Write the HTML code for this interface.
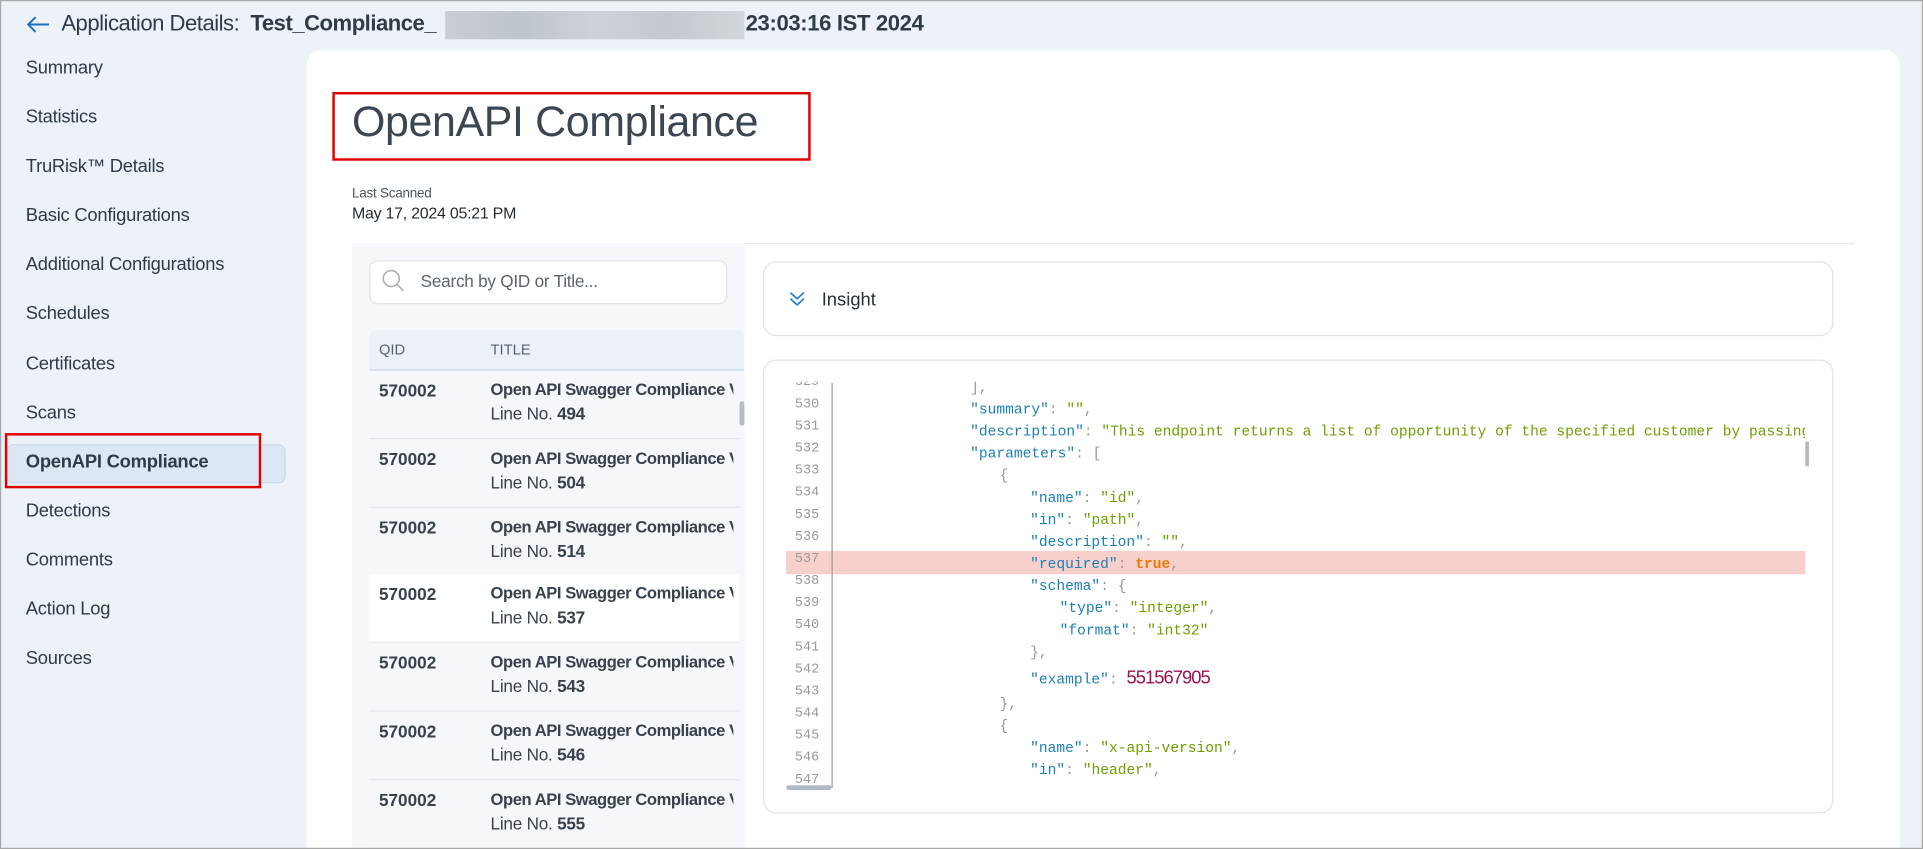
<!DOCTYPE html>
<html><head><meta charset="utf-8">
<style>
html,body{margin:0;padding:0;width:1923px;height:849px;overflow:hidden;background:#edf2f9;}
#s{position:absolute;left:0;top:0;width:1568px;height:692px;overflow:hidden;transform:scale(1.2264,1.2269);transform-origin:0 0;font-family:"Liberation Sans",sans-serif;color:#2d3a45;background:#edf2f9;}
.a{position:absolute;}
.nav{position:absolute;left:21px;font-size:15px;color:#2f3b47;letter-spacing:-0.2px;}
.row{position:absolute;left:301px;width:302px;height:55px;border-bottom:1px solid #e3e7ec;}
.row .q{position:absolute;left:8px;top:8px;font-weight:bold;font-size:14px;color:#37424d;}
.row .t{position:absolute;left:99px;top:8px;font-weight:bold;font-size:13.5px;letter-spacing:-0.35px;color:#37424d;white-space:nowrap;width:198px;overflow:hidden;}
.row .l{position:absolute;left:99px;top:27px;font-size:14px;color:#37424d;letter-spacing:-0.2px;}
.ln{position:absolute;left:640px;width:28px;text-align:right;font-family:"Liberation Mono",monospace;font-size:11px;color:#9a9a9a;}
.cd{position:absolute;font-family:"Liberation Mono",monospace;font-size:11.9px;color:#999;white-space:pre;}
.k{color:#1d7fb7}.s{color:#6e9f00}
</style></head><body><div id="s">
<!-- header -->
<svg class="a" style="left:21px;top:12px" width="20" height="16" viewBox="0 0 20 16"><path d="M19 8H2M8 2L2 8l6 6" fill="none" stroke="#1c6fc4" stroke-width="1.6"/></svg>
<div class="a" style="left:50px;top:9px;font-size:18px;letter-spacing:-0.4px;color:#2f3b47;white-space:nowrap;">Application Details:&nbsp; <b>Test_Compliance_</b></div>
<div class="a" style="left:363px;top:9px;width:244px;height:23px;background:linear-gradient(90deg,#c9ced4,#bfc5cc,#cdd2d8,#c3c9cf,#d2d6db);"></div>
<div class="a" style="left:608px;top:9px;font-size:18px;letter-spacing:-0.3px;font-weight:bold;color:#2f3b47;">23:03:16 IST 2024</div>
<!-- sidebar -->
<div class="a" style="left:5px;top:362px;width:226px;height:30px;background:#dbe7f4;border:1px solid #c9daee;border-radius:6px;"></div>
<div class="a" style="left:4px;top:353px;width:205px;height:41px;border:2px solid #e00000;"></div>
<div class="nav" style="top:47px">Summary</div>
<div class="nav" style="top:87px">Statistics</div>
<div class="nav" style="top:127px">TruRisk™ Details</div>
<div class="nav" style="top:167px">Basic Configurations</div>
<div class="nav" style="top:207px">Additional Configurations</div>
<div class="nav" style="top:247px">Schedules</div>
<div class="nav" style="top:288px">Certificates</div>
<div class="nav" style="top:328px">Scans</div>
<div class="nav" style="top:368px;font-weight:bold">OpenAPI Compliance</div>
<div class="nav" style="top:408px">Detections</div>
<div class="nav" style="top:448px">Comments</div>
<div class="nav" style="top:488px">Action Log</div>
<div class="nav" style="top:528px">Sources</div>
<!-- main card -->
<div class="a" style="left:250px;top:41px;width:1299px;height:680px;background:#fff;border-radius:12px;"></div>
<div class="a" style="left:271px;top:75px;width:386px;height:52px;border:2px solid #e00000;"></div>
<div class="a" style="left:287px;top:80px;font-size:35px;color:#3a4652;letter-spacing:-0.3px;">OpenAPI Compliance</div>
<div class="a" style="left:287px;top:152px;font-size:11px;color:#4a5560;letter-spacing:-0.2px;">Last Scanned</div>
<div class="a" style="left:287px;top:166px;font-size:13px;color:#1f2a33;letter-spacing:-0.2px;">May 17, 2024 05:21 PM</div>
<div class="a" style="left:607px;top:198px;width:905px;height:1px;background:#e6e9ed;"></div>
<!-- left panel -->
<div class="a" style="left:287px;top:198px;width:320px;height:500px;background:#f5f7fa;"></div>
<div class="a" style="left:301px;top:212px;width:290px;height:34px;background:#fff;border:1px solid #dfe3e8;border-radius:7px;"></div>
<svg class="a" style="left:311px;top:219px" width="20" height="20" viewBox="0 0 20 20"><circle cx="8" cy="8" r="6.5" fill="none" stroke="#a8b0b8" stroke-width="1.3"/><path d="M12.8 12.8L18 18" stroke="#a8b0b8" stroke-width="1.3"/></svg>
<div class="a" style="left:343px;top:221px;font-size:14px;color:#5a6570;letter-spacing:-0.2px;">Search by QID or Title...</div>
<div class="a" style="left:301px;top:269px;width:306px;height:32px;background:#ecf1f8;border-bottom:1px solid #b9d0ea;border-radius:6px 6px 0 0;"></div>
<div class="a" style="left:309px;top:278px;font-size:12px;color:#56626d;">QID</div>
<div class="a" style="left:400px;top:278px;font-size:12px;color:#56626d;">TITLE</div>
<div class="row" style="top:302px"><div class="q">570002</div><div class="t">Open API Swagger Compliance V</div><div class="l">Line No. <b>494</b></div></div>
<div class="row" style="top:358px"><div class="q">570002</div><div class="t">Open API Swagger Compliance V</div><div class="l">Line No. <b>504</b></div></div>
<div class="row" style="top:414px"><div class="q">570002</div><div class="t">Open API Swagger Compliance V</div><div class="l">Line No. <b>514</b></div></div>
<div class="row" style="top:468px;background:#fff"><div class="q">570002</div><div class="t">Open API Swagger Compliance V</div><div class="l">Line No. <b>537</b></div></div>
<div class="row" style="top:524px"><div class="q">570002</div><div class="t">Open API Swagger Compliance V</div><div class="l">Line No. <b>543</b></div></div>
<div class="row" style="top:580px"><div class="q">570002</div><div class="t">Open API Swagger Compliance V</div><div class="l">Line No. <b>546</b></div></div>
<div class="row" style="top:636px"><div class="q">570002</div><div class="t">Open API Swagger Compliance V</div><div class="l">Line No. <b>555</b></div></div>
<div class="a" style="left:603px;top:327px;width:4px;height:20px;background:#b4bcc5;border-radius:2px;"></div>
<!-- insight -->
<div class="a" style="left:622px;top:213px;width:871px;height:59px;border:1px solid #dde2e8;border-radius:11px;background:#fff;"></div>
<svg class="a" style="left:643px;top:237px" width="14" height="14" viewBox="0 0 14 14"><path d="M1.5 1.5l5.5 5 5.5-5M1.5 6.5l5.5 5 5.5-5" fill="none" stroke="#1f7fd0" stroke-width="1.3"/></svg>
<div class="a" style="left:670px;top:236px;font-size:15px;color:#24303b;">Insight</div>
<!-- code -->
<div class="a" style="left:622px;top:293px;width:871px;height:368px;border:1px solid #dde2e8;border-radius:11px;background:#fff;"></div>
<div class="a" style="left:641px;top:449px;width:831px;height:19px;background:#f7d0cb;"></div>
<div class="a" style="left:678px;top:312px;width:1px;height:330px;background:#9a9a9a;"></div>
<div class="a" style="left:641px;top:640px;width:37px;height:4px;background:#b0bac4;border-radius:2px;"></div>
<div class="a" style="left:1472px;top:360px;width:3px;height:20px;background:#b0bac4;"></div>
<div class="a" style="left:641px;top:311px;width:831px;height:332px;overflow:hidden;">
<div style="position:relative;left:-641px;top:-311px;">
<div class="ln" style="top:306px">529</div><div class="cd" style="left:791px;top:309px">],</div>
<div class="ln" style="top:324px">530</div><div class="cd" style="left:791px;top:327px"><span class="k">"summary"</span>: <span class="s">""</span>,</div>
<div class="ln" style="top:342px">531</div><div class="cd" style="left:791px;top:345px"><span class="k">"description"</span>: <span class="s">"This endpoint returns a list of opportunity of the specified customer by passing a custo</span></div>
<div class="ln" style="top:360px">532</div><div class="cd" style="left:791px;top:363px"><span class="k">"parameters"</span>: [</div>
<div class="ln" style="top:378px">533</div><div class="cd" style="left:815px;top:381px">{</div>
<div class="ln" style="top:396px">534</div><div class="cd" style="left:840px;top:399px"><span class="k">"name"</span>: <span class="s">"id"</span>,</div>
<div class="ln" style="top:414px">535</div><div class="cd" style="left:840px;top:417px"><span class="k">"in"</span>: <span class="s">"path"</span>,</div>
<div class="ln" style="top:432px">536</div><div class="cd" style="left:840px;top:435px"><span class="k">"description"</span>: <span class="s">""</span>,</div>
<div class="ln" style="top:450px">537</div><div class="cd" style="left:840px;top:453px"><span class="k">"required"</span>: <b style="color:#e47d00">true</b>,</div>
<div class="ln" style="top:468px">538</div><div class="cd" style="left:840px;top:471px"><span class="k">"schema"</span>: {</div>
<div class="ln" style="top:486px">539</div><div class="cd" style="left:864px;top:489px"><span class="k">"type"</span>: <span class="s">"integer"</span>,</div>
<div class="ln" style="top:504px">540</div><div class="cd" style="left:864px;top:507px"><span class="k">"format"</span>: <span class="s">"int32"</span></div>
<div class="ln" style="top:522px">541</div><div class="cd" style="left:840px;top:525px">},</div>
<div class="ln" style="top:540px">542</div><div class="cd" style="left:840px;top:544px"><span class="k">"example"</span>: <span style="color:#a0104f;font-family:'Liberation Sans',sans-serif;font-size:15px;letter-spacing:-0.8px">551567905</span></div>
<div class="ln" style="top:558px">543</div><div class="cd" style="left:815px;top:567px">},</div>
<div class="ln" style="top:576px">544</div><div class="cd" style="left:815px;top:585px">{</div>
<div class="ln" style="top:594px">545</div><div class="cd" style="left:840px;top:603px"><span class="k">"name"</span>: <span class="s">"x-api-version"</span>,</div>
<div class="ln" style="top:612px">546</div><div class="cd" style="left:840px;top:621px"><span class="k">"in"</span>: <span class="s">"header"</span>,</div>
<div class="ln" style="top:630px">547</div>
</div></div>
<div class="a" style="left:0;top:0;width:1566px;height:690px;border:1px solid #a9a9a9;"></div>
</div></body></html>
